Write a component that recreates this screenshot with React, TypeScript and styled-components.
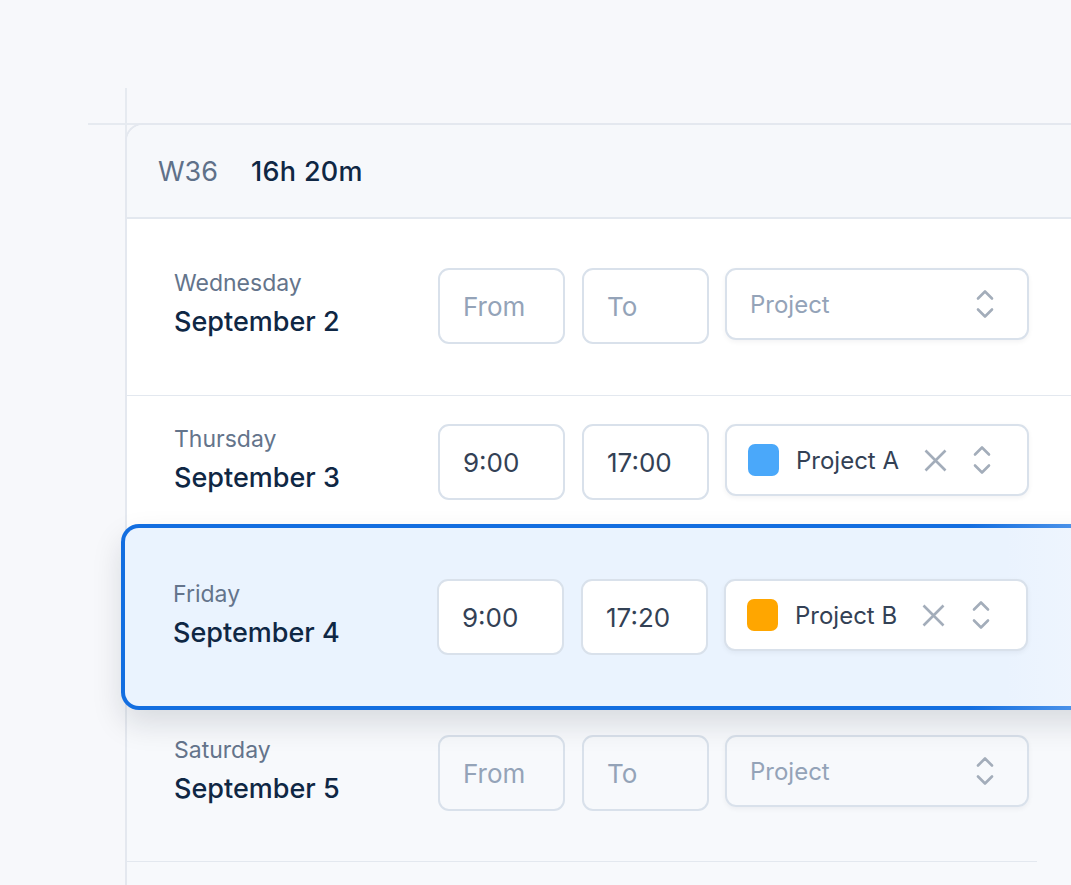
import React from "react";
import styled, { createGlobalStyle, css } from "styled-components";

const GlobalStyle = createGlobalStyle`
  html, body {
    margin: 0;
    padding: 0;
    background: #f7f8fb;
    overflow: hidden;
  }
  body {
    font-family: Inter, "Noto Sans", sans-serif;
    -webkit-font-smoothing: antialiased;
  }
`;

const Page = styled.div`
  position: relative;
  width: 1071px;
  height: 885px;
  overflow: hidden;
  padding: 124px 0 0 125px;
  box-sizing: border-box;
`;

const GuideH = styled.div`
  position: absolute;
  top: 123px;
  left: 88px;
  width: 60px;
  height: 2px;
  background: #e6eaf0;
`;

const GuideV = styled.div`
  position: absolute;
  top: 88px;
  left: 125px;
  width: 2px;
  height: 60px;
  background: #e6eaf0;
`;

const Card = styled.div`
  position: relative;
  height: 100%;
  border-left: 2px solid #e4e8ef;
  border-top: 2px solid #e4e8ef;
  border-top-left-radius: 18px;
  background: #f7f9fc;
  margin-top: -1px;
`;

const Header = styled.div`
  display: flex;
  align-items: center;
  gap: 33px;
  height: 92px;
  padding-left: 31px;
  background: #f6f8fb;
  border-bottom: 2px solid #e3e8ef;
  border-top-left-radius: 16px;
  font-size: 27px;
`;

const Week = styled.span`
  color: #5f7189;
  font-weight: 400;
`;

const Total = styled.span`
  color: #0f2744;
  font-weight: 500;
  letter-spacing: 0.3px;
`;

const Row = styled.div<{ $first?: boolean; $muted?: boolean; $active?: boolean }>`
  position: relative;
  display: grid;
  grid-template-columns: 247px 127px 127px 303px;
  grid-template-rows: 76px;
  align-content: start;
  column-gap: 17px;
  align-items: start;
  box-sizing: border-box;
  height: 155px;
  padding: 28px 0 0 47px;
  background: #ffffff;
  border-bottom: 1.5px solid #e3e8ef;

  ${(p) =>
    p.$first &&
    css`
      height: 177px;
      padding-top: 49px;
    `}

  ${(p) =>
    p.$muted &&
    css`
      background: transparent;
      margin-right: 34px;
    `}

  ${(p) =>
    p.$active &&
    css`
      z-index: 1;
      height: 186px;
      margin: -27px -60px -3px -6px;
      padding: 51px 0 0 48px;
      border: 4px solid transparent;
      border-radius: 18px;
      background:
        linear-gradient(90deg, #eaf3fe 0%, #eaf3fe 88%, #f1f6fe 100%) padding-box,
        linear-gradient(90deg, #136ee0 0%, #136ee0 84%, #6aa6ee 100%) border-box;
      box-shadow: 0 14px 30px rgba(15, 23, 42, 0.13);
    `}
`;

const DateCol = styled.div`
  display: flex;
  flex-direction: column;
  gap: 8px;
  align-self: center;
  margin-top: -7px;
`;

const DayName = styled.span`
  font-size: 23px;
  color: #64748b;
  line-height: 30px;
`;

const DateText = styled.span`
  font-size: 27px;
  font-weight: 500;
  color: #0f2744;
  line-height: 32px;
`;

const TimeBox = styled.div<{ $empty?: boolean; $muted?: boolean }>`
  display: flex;
  align-items: center;
  box-sizing: border-box;
  height: 76px;
  padding-left: 23px;
  border: 2px solid #d9e1eb;
  border-radius: 11px;
  background: ${(p) => (p.$muted ? "transparent" : "#ffffff")};
  font-size: 26px;
  color: ${(p) => (p.$empty ? "#94a3b8" : "#334155")};
`;

const Select = styled.div<{ $muted?: boolean; $empty?: boolean }>`
  display: flex;
  align-items: center;
  box-sizing: border-box;
  height: 72px;
  margin-left: -1px;
  padding: 0 ${(p) => (p.$empty ? "33px" : "36px")} 0 21px;
  border: 2px solid #d9e1eb;
  border-radius: 11px;
  background: ${(p) => (p.$muted ? "transparent" : "#ffffff")};
  box-shadow: 0 2px 5px rgba(15, 23, 42, 0.05);
`;

const Swatch = styled.span<{ $color: string }>`
  width: 31px;
  height: 32px;
  border-radius: 7px;
  background: ${(p) => p.$color};
  margin-right: 17px;
  flex-shrink: 0;
`;

const ProjectName = styled.span<{ $empty?: boolean }>`
  font-size: 24px;
  color: ${(p) => (p.$empty ? "#94a3b8" : "#334155")};
  margin-left: ${(p) => (p.$empty ? "2px" : "0")};
`;

const Clear = styled.span`
  display: flex;
  margin-left: 25px;
`;

const Chevrons = styled.span`
  display: flex;
  margin-left: auto;
`;

function ClearIcon() {
  return (
    <svg width="23" height="23" viewBox="0 0 23 23" fill="none">
      <path
        d="M1.5 1.5 L21.5 21.5 M21.5 1.5 L1.5 21.5"
        stroke="#a3adba"
        strokeWidth="2.6"
      />
    </svg>
  );
}

function UpDownIcon() {
  return (
    <svg width="18" height="30" viewBox="0 0 18 30" fill="none">
      <path
        d="M2 9.5 L9 2.5 L16 9.5 M2 20.5 L9 27.5 L16 20.5"
        stroke="#a3adba"
        strokeWidth="2.6"
        strokeLinecap="round"
        strokeLinejoin="round"
      />
    </svg>
  );
}

type Day = {
  day: string;
  date: string;
  from?: string;
  to?: string;
  project?: { name: string; color: string };
};

const days: Day[] = [
  { day: "Wednesday", date: "September 2" },
  {
    day: "Thursday",
    date: "September 3",
    from: "9:00",
    to: "17:00",
    project: { name: "Project A", color: "#4aa8fa" },
  },
  {
    day: "Friday",
    date: "September 4",
    from: "9:00",
    to: "17:20",
    project: { name: "Project B", color: "#ffa600" },
  },
  { day: "Saturday", date: "September 5" },
];

export default function App() {
  return (
    <>
      <GlobalStyle />
      <Page>
        <GuideH />
        <GuideV />
        <Card>
          <Header>
            <Week>W36</Week>
            <Total>16h 20m</Total>
          </Header>
          {days.map((d, i) => {
            const muted = i === 3;
            return (
              <Row key={d.date} $first={i === 0} $active={i === 2} $muted={muted}>
                <DateCol>
                  <DayName>{d.day}</DayName>
                  <DateText>{d.date}</DateText>
                </DateCol>
                <TimeBox $empty={!d.from} $muted={muted}>
                  {d.from ?? "From"}
                </TimeBox>
                <TimeBox $empty={!d.to} $muted={muted}>
                  {d.to ?? "To"}
                </TimeBox>
                <Select $muted={muted} $empty={!d.project}>
                  {d.project ? (
                    <>
                      <Swatch $color={d.project.color} />
                      <ProjectName>{d.project.name}</ProjectName>
                      <Clear>
                        <ClearIcon />
                      </Clear>
                    </>
                  ) : (
                    <ProjectName $empty>Project</ProjectName>
                  )}
                  <Chevrons>
                    <UpDownIcon />
                  </Chevrons>
                </Select>
              </Row>
            );
          })}
        </Card>
      </Page>
    </>
  );
}
